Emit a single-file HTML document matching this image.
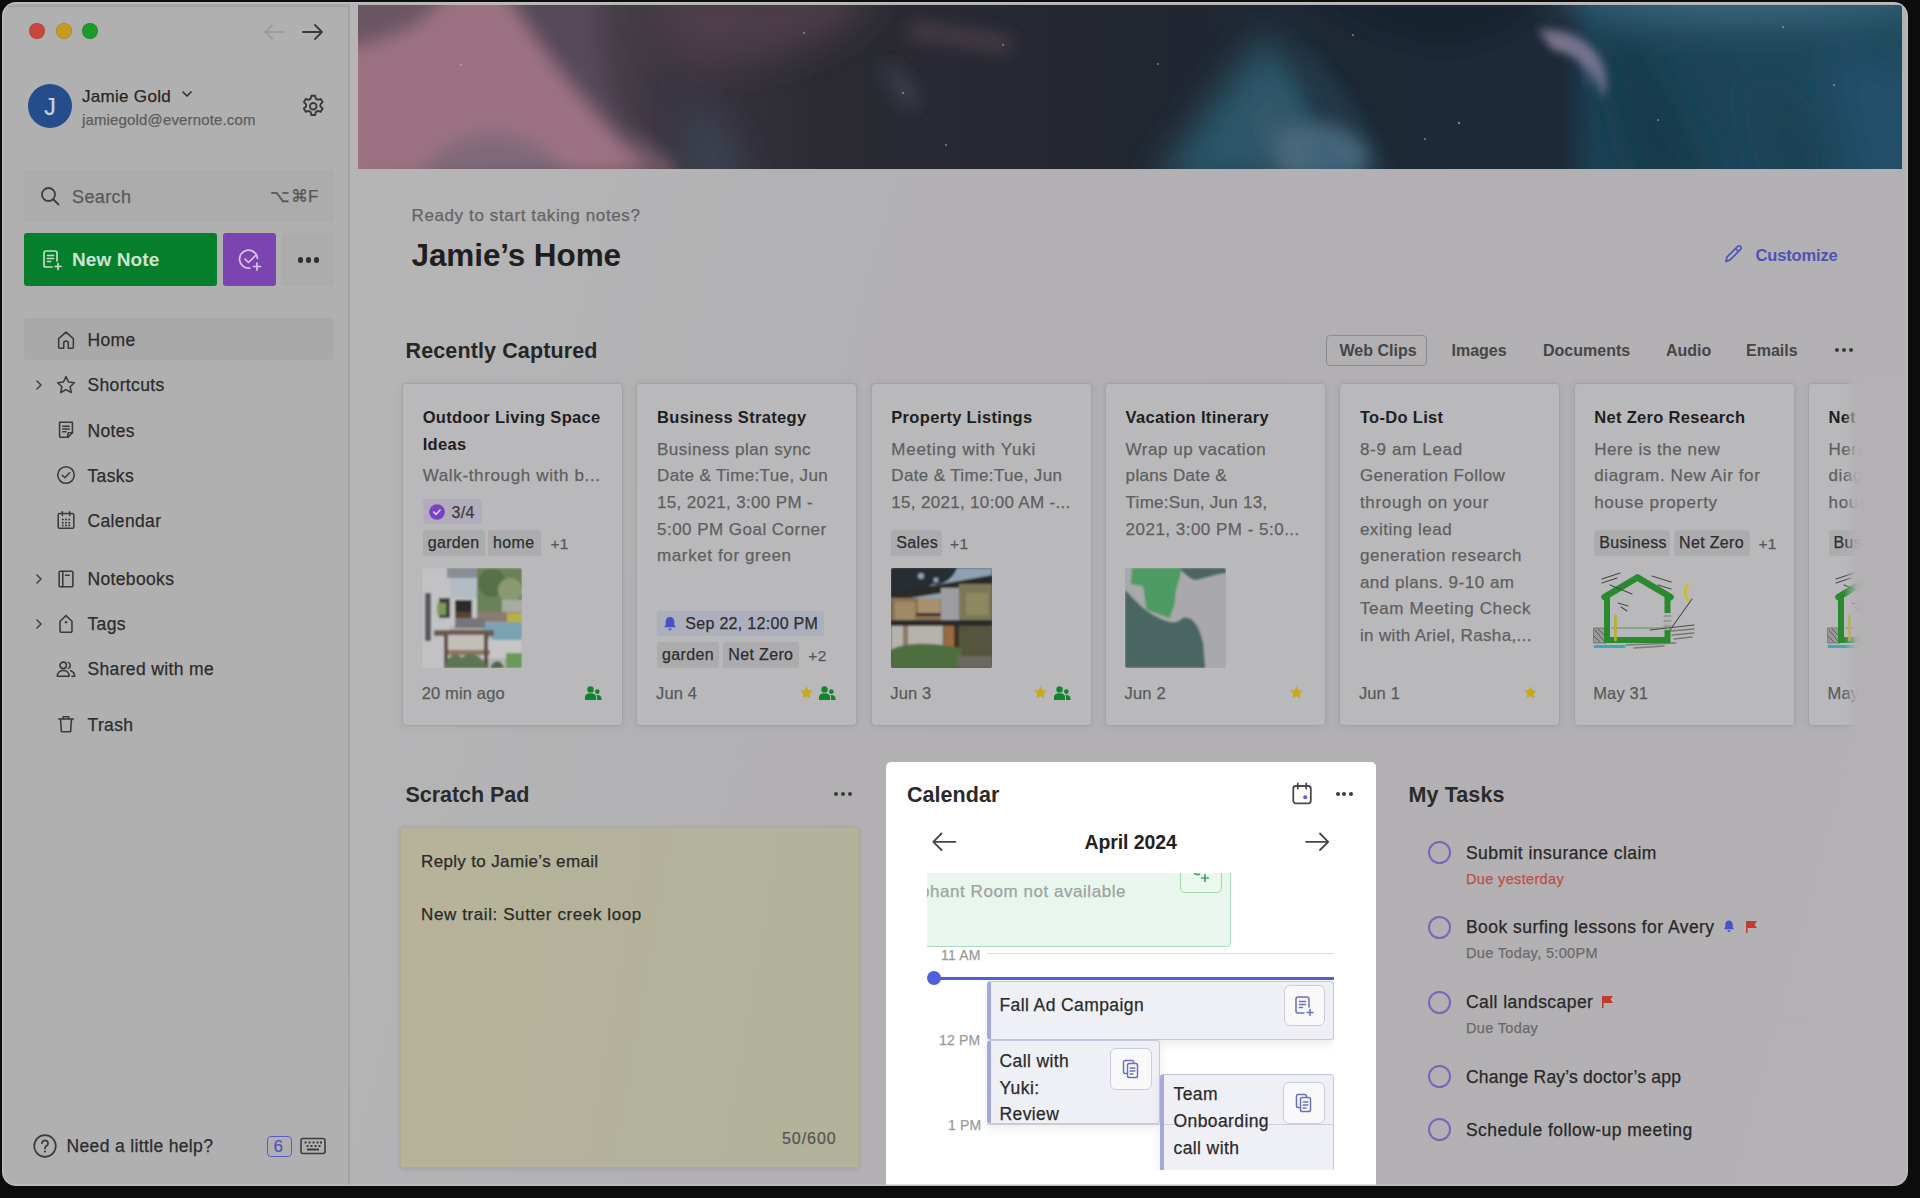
<!DOCTYPE html>
<html><head><meta charset="utf-8">
<style>
*{box-sizing:border-box;margin:0;padding:0}
html,body{width:1920px;height:1198px;overflow:hidden;background:#0c0c0c;font-family:"Liberation Sans",sans-serif;}
.a{position:absolute}
.t{position:absolute;white-space:nowrap;line-height:1;-webkit-text-stroke:0.25px currentColor}
svg{position:absolute;overflow:visible}
</style></head><body>

<div class="a" style="left:2px;top:2px;width:1906px;height:1184px;border-radius:14px;background:linear-gradient(105deg,#b5b5b6 0%,#b5b5b6 22%,#b2b1b3 38%,#b2b0b3 60%,#b4b1b4 100%)"></div>
<div class="a" style="left:2px;top:2px;width:348px;height:1184px;border-radius:14px 0 0 14px;background:#b0b0b0;border-right:2px solid #a3a3a3"></div>
<div class="a" style="left:29px;top:23.3px;width:16px;height:16px;border-radius:50%;background:#c9463f;box-shadow:inset 0 0 0 0.7px rgba(0,0,0,0.12)"></div>
<div class="a" style="left:55.5px;top:23.3px;width:16px;height:16px;border-radius:50%;background:#c79a22;box-shadow:inset 0 0 0 0.7px rgba(0,0,0,0.12)"></div>
<div class="a" style="left:82px;top:23.3px;width:16px;height:16px;border-radius:50%;background:#1c9a2a;box-shadow:inset 0 0 0 0.7px rgba(0,0,0,0.12)"></div>
<svg style="left:262px;top:22px" width="24" height="20" viewBox="0 0 24 20"><path d="M22 10H3M10 3L3 10l7 7" fill="none" stroke="#9d9d9d" stroke-width="1.8" stroke-linecap="round" stroke-linejoin="round"/></svg>
<svg style="left:301px;top:22px" width="24" height="20" viewBox="0 0 24 20"><path d="M2 10h19M14 3l7 7-7 7" fill="none" stroke="#3a3a3a" stroke-width="1.8" stroke-linecap="round" stroke-linejoin="round"/></svg>
<div class="a" style="left:28px;top:84px;width:44px;height:44px;border-radius:50%;background:#234d8b"></div>
<div class="t" style="left:44.3px;top:96.40px;font-size:23px;color:#cdd2dc;font-weight:normal;letter-spacing:0.0px;">J</div>
<div class="t" style="left:82px;top:87.88px;font-size:17px;color:#262626;font-weight:normal;letter-spacing:0.3px;">Jamie Gold</div>
<svg style="left:180.5px;top:89px" width="12" height="10" viewBox="0 0 12 10"><path d="M2 3l4 4 4-4" fill="none" stroke="#333" stroke-width="1.7" stroke-linecap="round" stroke-linejoin="round"/></svg>
<div class="t" style="left:82px;top:111.54px;font-size:15px;color:#5d5d5d;font-weight:normal;letter-spacing:0.15px;">jamiegold@evernote.com</div>
<svg style="left:299.5px;top:93px" width="26.5" height="26.5" viewBox="0 0 24 24"><g fill="none" stroke="#3a3a3a" stroke-width="1.7" stroke-linejoin="round"><path d="M10.3 2.5h3.4l.6 2.6 1.9 1.1 2.6-.8 1.7 2.9-2 1.8v2.2l2 1.8-1.7 2.9-2.6-.8-1.9 1.1-.6 2.6h-3.4l-.6-2.6-1.9-1.1-2.6.8-1.7-2.9 2-1.8v-2.2l-2-1.8 1.7-2.9 2.6.8 1.9-1.1z"/><circle cx="12" cy="12" r="3"/></g></svg>
<div class="a" style="left:24px;top:170px;width:310px;height:52px;border-radius:4px;background:#acacac"></div>
<svg style="left:40px;top:186px" width="20" height="20" viewBox="0 0 20 20"><circle cx="8.5" cy="8.5" r="6.5" fill="none" stroke="#3d3d3d" stroke-width="1.8"/><path d="M13.5 13.5l5 5" stroke="#3d3d3d" stroke-width="1.8" stroke-linecap="round"/></svg>
<div class="t" style="left:72px;top:187.55px;font-size:18px;color:#5a5a5a;font-weight:normal;letter-spacing:0.4px;">Search</div>
<div class="t" style="left:270px;top:188.38px;font-size:17px;color:#575757;font-weight:normal;letter-spacing:0.5px;">⌥⌘F</div>
<div class="a" style="left:24px;top:233px;width:193px;height:53px;border-radius:3px;background:#057f2b"></div>
<svg style="left:41px;top:249px" width="22" height="22" viewBox="0 0 22 22"><g fill="none" stroke="#c5dcc9" stroke-width="1.7" stroke-linecap="round" stroke-linejoin="round"><path d="M11 18H5a2 2 0 0 1-2-2V4a2 2 0 0 1 2-2h9a2 2 0 0 1 2 2v8"/><path d="M6.5 6.5h6M6.5 9.5h6M6.5 12.5h3M17 14.5v6M14 17.5h6"/></g></svg>
<div class="t" style="left:72px;top:250.22px;font-size:19px;color:#cfe3d2;font-weight:bold;letter-spacing:0.1px;-webkit-text-stroke:0;">New Note</div>
<div class="a" style="left:223px;top:233px;width:53px;height:53px;border-radius:3px;background:#7c44b0"></div>
<svg style="left:237px;top:247px" width="26" height="26" viewBox="0 0 26 26"><g fill="none" stroke="#d9c8e8" stroke-width="1.7" stroke-linecap="round" stroke-linejoin="round"><path d="M20.5 11.5A9 9 0 1 0 13 21"/><path d="M8 12l3.5 3.5 7-7"/><path d="M20 16v7M16.5 19.5h7"/></g></svg>
<div class="a" style="left:281px;top:233px;width:53px;height:53px;border-radius:3px;background:#acacac"></div>
<div class="a" style="left:297.8px;top:257.2px;width:5.5px;height:5.5px;border-radius:50%;background:#2e2e2e"></div>
<div class="a" style="left:305.8px;top:257.2px;width:5.5px;height:5.5px;border-radius:50%;background:#2e2e2e"></div>
<div class="a" style="left:313.8px;top:257.2px;width:5.5px;height:5.5px;border-radius:50%;background:#2e2e2e"></div>
<div class="a" style="left:24px;top:318px;width:310px;height:42px;border-radius:4px;background:#a9a9a9"></div>
<svg style="left:55px;top:328.7px" width="22" height="22" viewBox="0 0 24 24"><g fill="none" stroke="#3a3a3a" stroke-width="1.7" stroke-linecap="round" stroke-linejoin="round"><path d="M4 10.5L12 3.5l8 7V20a1 1 0 0 1-1 1h-4.5v-5.5a2.5 2.5 0 0 0-5 0V21H5a1 1 0 0 1-1-1z"/></g></svg>
<div class="t" style="left:87.5px;top:332.37px;font-size:17.5px;color:#2c2c2c;font-weight:normal;letter-spacing:0.35px;">Home</div>
<svg style="left:55px;top:373.8px" width="22" height="22" viewBox="0 0 24 24"><g fill="none" stroke="#3a3a3a" stroke-width="1.7" stroke-linecap="round" stroke-linejoin="round"><path d="M12 2.8l2.8 5.9 6.3.8-4.6 4.4 1.2 6.3L12 17.1l-5.7 3.1 1.2-6.3-4.6-4.4 6.3-.8z"/></g></svg>
<div class="t" style="left:87.5px;top:377.47px;font-size:17.5px;color:#2c2c2c;font-weight:normal;letter-spacing:0.35px;">Shortcuts</div>
<svg style="left:33px;top:378.8px" width="12" height="12" viewBox="0 0 12 12"><path d="M4 2l4 4-4 4" fill="none" stroke="#444" stroke-width="1.6" stroke-linecap="round" stroke-linejoin="round"/></svg>
<svg style="left:55px;top:418.9px" width="22" height="22" viewBox="0 0 24 24"><g fill="none" stroke="#3a3a3a" stroke-width="1.7" stroke-linecap="round" stroke-linejoin="round"><path d="M5 3.5h14v11.5l-5 5H6a1 1 0 0 1-1-1z"/><path d="M8.5 8h7M8.5 11h7M8.5 14h3.5M14 20v-4a1 1 0 0 1 1-1h4"/></g></svg>
<div class="t" style="left:87.5px;top:422.57px;font-size:17.5px;color:#2c2c2c;font-weight:normal;letter-spacing:0.35px;">Notes</div>
<svg style="left:55px;top:464px" width="22" height="22" viewBox="0 0 24 24"><g fill="none" stroke="#3a3a3a" stroke-width="1.7" stroke-linecap="round" stroke-linejoin="round"><circle cx="12" cy="12" r="9"/><path d="M8 12.3l2.7 2.7 5.3-5.5"/></g></svg>
<div class="t" style="left:87.5px;top:467.67px;font-size:17.5px;color:#2c2c2c;font-weight:normal;letter-spacing:0.35px;">Tasks</div>
<svg style="left:55px;top:509px" width="22" height="22" viewBox="0 0 24 24"><g fill="none" stroke="#3a3a3a" stroke-width="1.7" stroke-linecap="round" stroke-linejoin="round"><rect x="3.5" y="5" width="17" height="16" rx="1.5"/><path d="M8 3v4M16 3v4"/><g stroke="none" fill="#3a3a3a"><circle cx="8.5" cy="11.5" r="1.1"/><circle cx="12" cy="11.5" r="1.1"/><circle cx="15.5" cy="11.5" r="1.1"/><circle cx="8.5" cy="15" r="1.1"/><circle cx="12" cy="15" r="1.1"/><circle cx="15.5" cy="15" r="1.1"/><circle cx="8.5" cy="18" r="1.1"/><circle cx="12" cy="18" r="1.1"/><circle cx="15.5" cy="18" r="1.1"/></g></g></svg>
<div class="t" style="left:87.5px;top:512.67px;font-size:17.5px;color:#2c2c2c;font-weight:normal;letter-spacing:0.35px;">Calendar</div>
<svg style="left:55px;top:567.5px" width="22" height="22" viewBox="0 0 24 24"><g fill="none" stroke="#3a3a3a" stroke-width="1.7" stroke-linecap="round" stroke-linejoin="round"><rect x="4.5" y="3.5" width="15" height="17" rx="1"/><path d="M8.5 3.5v17M11.5 8h4"/></g></svg>
<div class="t" style="left:87.5px;top:571.17px;font-size:17.5px;color:#2c2c2c;font-weight:normal;letter-spacing:0.35px;">Notebooks</div>
<svg style="left:33px;top:572.5px" width="12" height="12" viewBox="0 0 12 12"><path d="M4 2l4 4-4 4" fill="none" stroke="#444" stroke-width="1.6" stroke-linecap="round" stroke-linejoin="round"/></svg>
<svg style="left:55px;top:612.6px" width="22" height="22" viewBox="0 0 24 24"><g fill="none" stroke="#3a3a3a" stroke-width="1.7" stroke-linecap="round" stroke-linejoin="round"><path d="M12 2.8l6.5 6.2V20a1 1 0 0 1-1 1h-11a1 1 0 0 1-1-1V9z"/><circle cx="12" cy="10" r="1.3" fill="#3a3a3a" stroke="none"/></g></svg>
<div class="t" style="left:87.5px;top:616.27px;font-size:17.5px;color:#2c2c2c;font-weight:normal;letter-spacing:0.35px;">Tags</div>
<svg style="left:33px;top:617.6px" width="12" height="12" viewBox="0 0 12 12"><path d="M4 2l4 4-4 4" fill="none" stroke="#444" stroke-width="1.6" stroke-linecap="round" stroke-linejoin="round"/></svg>
<svg style="left:55px;top:657.75px" width="22" height="22" viewBox="0 0 24 24"><g fill="none" stroke="#3a3a3a" stroke-width="1.7" stroke-linecap="round" stroke-linejoin="round"><circle cx="9" cy="8" r="3.5"/><path d="M2.5 20c0-3.8 2.9-6.5 6.5-6.5s6.5 2.7 6.5 6.5z"/><path d="M14.5 4.8a3.5 3.5 0 0 1 0 6.5M17 13.8c2.6.8 4.5 3.1 4.5 6.2h-3"/></g></svg>
<div class="t" style="left:87.5px;top:661.42px;font-size:17.5px;color:#2c2c2c;font-weight:normal;letter-spacing:0.35px;">Shared with me</div>
<svg style="left:55px;top:713.3px" width="22" height="22" viewBox="0 0 24 24"><g fill="none" stroke="#3a3a3a" stroke-width="1.7" stroke-linecap="round" stroke-linejoin="round"><path d="M4 6.5h16M9 6.5V4h6v2.5M6 6.5l1 14h10l1-14"/></g></svg>
<div class="t" style="left:87.5px;top:716.97px;font-size:17.5px;color:#2c2c2c;font-weight:normal;letter-spacing:0.35px;">Trash</div>
<svg style="left:33px;top:1134px" width="24" height="24" viewBox="0 0 24 24"><circle cx="12" cy="12" r="10.8" fill="none" stroke="#3c3c3c" stroke-width="1.7"/><path d="M9 9.3a3 3 0 1 1 4.2 2.8c-.8.4-1.2 1-1.2 1.8v.7" fill="none" stroke="#3c3c3c" stroke-width="1.7" stroke-linecap="round"/><circle cx="12" cy="17.6" r="1.1" fill="#3c3c3c"/></svg>
<div class="t" style="left:66.5px;top:1137.77px;font-size:17.5px;color:#2c2c2c;font-weight:normal;letter-spacing:0.35px;">Need a little help?</div>
<div class="a" style="left:266.5px;top:1135.5px;width:25.5px;height:21px;border:1.7px solid #5560c6;border-radius:4px"></div>
<div class="t" style="left:273.5px;top:1137.88px;font-size:17px;color:#4c57c0;font-weight:normal;letter-spacing:0.0px;">6</div>
<svg style="left:300px;top:1137px" width="26" height="18" viewBox="0 0 26 18"><rect x="1" y="1.5" width="24" height="15" rx="2" fill="none" stroke="#3c3c3c" stroke-width="1.6"/><g fill="#3c3c3c"><rect x="4.5" y="4.5" width="2" height="2"/><rect x="8.5" y="4.5" width="2" height="2"/><rect x="12.5" y="4.5" width="2" height="2"/><rect x="16.5" y="4.5" width="2" height="2"/><rect x="20" y="4.5" width="2" height="2"/><rect x="6.5" y="8" width="2" height="2"/><rect x="10.5" y="8" width="2" height="2"/><rect x="14.5" y="8" width="2" height="2"/><rect x="18.5" y="8" width="2" height="2"/><rect x="7" y="11.5" width="12" height="2"/></g></svg>
<svg style="left:358px;top:5px" width="1544" height="164" viewBox="0 0 1544 164" preserveAspectRatio="none">
<defs>
<filter id="bl" x="-20%" y="-50%" width="140%" height="200%"><feGaussianBlur stdDeviation="9"/></filter>
<filter id="bl3" x="-20%" y="-50%" width="140%" height="200%"><feGaussianBlur stdDeviation="18"/></filter>
<filter id="bl2" x="-20%" y="-50%" width="140%" height="200%"><feGaussianBlur stdDeviation="4"/></filter>
<linearGradient id="hg" x1="0" y1="0" x2="1" y2="0">
<stop offset="0" stop-color="#8e6a7a"/><stop offset="0.2" stop-color="#3a3540"/><stop offset="0.3" stop-color="#2c2b34"/><stop offset="0.5" stop-color="#222630"/><stop offset="0.6" stop-color="#1e2834"/><stop offset="0.78" stop-color="#1c2a38"/><stop offset="0.8" stop-color="#1c4054"/><stop offset="1" stop-color="#1e4a5e"/>
</linearGradient>
<clipPath id="hc"><rect width="1544" height="164"/></clipPath>
</defs>
<g clip-path="url(#hc)">
<rect width="1544" height="164" fill="url(#hg)"/>
<g filter="url(#bl3)">
<path d="M290 -20 L 520 -20 C 500 30, 420 60, 330 60 C 300 40, 290 20, 290 -20Z" fill="#4e3c48"/>
<path d="M330 90 C 360 110, 380 140, 390 180 L 330 180Z" fill="#3a4452"/>
<path d="M795 180 C 830 130, 870 75, 906 30 C 940 60, 975 110, 1005 180Z" fill="#2c566a"/>
<path d="M900 80 C 930 110, 950 150, 960 180 L 920 180 C 910 140, 900 110, 900 80Z" fill="#3e5a6a"/>
<path d="M1170 -20 C 1250 20, 1400 30, 1560 0 L 1560 -20Z" fill="#3d6a80"/>
<path d="M1260 20 C 1300 60, 1330 120, 1350 180 L 1280 180 C 1260 120, 1240 70, 1260 20Z" fill="#173a4c"/>
<path d="M1400 70 C 1440 100, 1460 140, 1470 180 L 1420 180 C 1410 140, 1400 110, 1400 70Z" fill="#1c4052"/>
<path d="M1470 40 C 1520 60, 1550 70, 1560 70 L 1560 180 L 1500 180 C 1490 130, 1480 90, 1470 40Z" fill="#24506a"/>
<path d="M0 90 C 30 100, 60 110, 80 130 L 0 130Z" fill="#8a6a7a"/>
</g>
<g filter="url(#bl)">
<path d="M-20 40 C 40 20, 60 5, 80 -20 L 142 -20 C 190 55, 260 115, 322 170 L -20 170 Z" fill="#9c7282"/>
<path d="M-20 -20 L 95 -20 C 75 15, 40 38, -20 44 Z" fill="#6c5464"/>
<path d="M142 -20 L 240 -20 C 232 35, 240 75, 258 105 C 275 135, 295 155, 315 175 L 300 175 C 245 120, 190 60, 142 -20 Z" fill="#564a5a"/>
<path d="M60 170 C 80 135, 130 115, 175 138 C 195 148, 205 160, 210 170 Z" fill="#80697a"/>
<path d="M555 20 C 590 25, 630 30, 655 35 L 650 45 C 620 40, 590 35, 550 30Z" fill="#5a4652"/>
<path d="M530 60 C 545 70, 555 85, 560 100 L 548 100 C 540 85, 532 72, 525 62Z" fill="#4a4a56"/>
<path d="M940 40 C 980 80, 1010 120, 1030 172 L 980 172 C 960 120, 945 80, 940 40Z" fill="#22384a"/>
<path d="M915 130 C 950 112, 990 118, 1010 150 L 1000 172 L 925 172Z" fill="#4a687c"/><path d="M950 125 C 975 130, 995 150, 1000 172 L 955 172Z" fill="#43647a"/>
<path d="M950 -20 C 980 10, 1020 30, 1080 40 C 1130 40, 1160 20, 1200 -20Z" fill="#19242f"/>
</g>
<g filter="url(#bl2)">
<path d="M1180 25 C 1225 20, 1258 55, 1245 95 C 1240 70, 1225 50, 1195 45Z" fill="#8a7e9c" opacity="0.8"/>
<path d="M1190 38 C 1215 40, 1230 60, 1232 80" stroke="#a08aa8" stroke-width="3" fill="none" opacity="0.6"/>
</g>
<g fill="#c8ccd8" opacity="0.55"><circle cx="103" cy="60" r="1"/><circle cx="446" cy="28" r="1"/><circle cx="545" cy="88" r="1.1"/><circle cx="645" cy="40" r="1"/><circle cx="800" cy="59" r="1"/><circle cx="1101" cy="118" r="1.2"/><circle cx="1425" cy="22" r="1"/><circle cx="1476" cy="80" r="1"/><circle cx="1067" cy="134" r="1"/><circle cx="588" cy="140" r="1"/><circle cx="995" cy="30" r="1"/><circle cx="1300" cy="115" r="1"/></g>
</g>
</svg>
<div class="t" style="left:411.5px;top:207.38px;font-size:17px;color:#646466;font-weight:normal;letter-spacing:0.62px;">Ready to start taking notes?</div>
<div class="t" style="left:411.5px;top:239.84px;font-size:31.5px;color:#1f1f1f;font-weight:bold;letter-spacing:-0.1px;-webkit-text-stroke:0;">Jamie’s Home</div>
<svg style="left:1722px;top:243px" width="22" height="22" viewBox="0 0 22 22"><path d="M4 18.5l1-4.5L15.5 3.5a2 2 0 0 1 3 3L8 17z M13.5 5.5l3 3" fill="none" stroke="#4b54b4" stroke-width="1.7" stroke-linejoin="round" stroke-linecap="round"/></svg>
<div class="t" style="left:1755.5px;top:247.30px;font-size:16.5px;color:#4b54b4;font-weight:bold;letter-spacing:-0.15px;-webkit-text-stroke:0;">Customize</div>
<div class="t" style="left:405.5px;top:341.14px;font-size:21.5px;color:#262626;font-weight:bold;letter-spacing:0.12px;-webkit-text-stroke:0;">Recently Captured</div>
<div class="a" style="left:1326px;top:334.5px;width:101px;height:31px;border:1.3px solid #8b8b8d;border-radius:4px"></div>
<div class="t" style="left:1339.5px;top:342.71px;font-size:16px;color:#454547;font-weight:bold;letter-spacing:0.0px;-webkit-text-stroke:0;">Web Clips</div>
<div class="t" style="left:1451.5px;top:342.71px;font-size:16px;color:#454547;font-weight:bold;letter-spacing:0.0px;-webkit-text-stroke:0;">Images</div>
<div class="t" style="left:1543px;top:342.71px;font-size:16px;color:#454547;font-weight:bold;letter-spacing:0.0px;-webkit-text-stroke:0;">Documents</div>
<div class="t" style="left:1666px;top:342.71px;font-size:16px;color:#454547;font-weight:bold;letter-spacing:0.0px;-webkit-text-stroke:0;">Audio</div>
<div class="t" style="left:1746px;top:342.71px;font-size:16px;color:#454547;font-weight:bold;letter-spacing:0.0px;-webkit-text-stroke:0;">Emails</div>
<div class="a" style="left:1835px;top:348px;width:4.2px;height:4.2px;border-radius:50%;background:#3a3a3a"></div>
<div class="a" style="left:1842px;top:348px;width:4.2px;height:4.2px;border-radius:50%;background:#3a3a3a"></div>
<div class="a" style="left:1849px;top:348px;width:4.2px;height:4.2px;border-radius:50%;background:#3a3a3a"></div>
<div class="a" style="left:402.0px;top:383px;width:221px;height:343px;border-radius:4px;background:#b9b9bb;border:1px solid #a3a3a5;box-shadow:0 0 9px rgba(0,0,0,0.075)"></div>
<div class="a" style="left:636.3px;top:383px;width:221px;height:343px;border-radius:4px;background:#b9b9bb;border:1px solid #a3a3a5;box-shadow:0 0 9px rgba(0,0,0,0.075)"></div>
<div class="a" style="left:870.6px;top:383px;width:221px;height:343px;border-radius:4px;background:#b9b9bb;border:1px solid #a3a3a5;box-shadow:0 0 9px rgba(0,0,0,0.075)"></div>
<div class="a" style="left:1104.9px;top:383px;width:221px;height:343px;border-radius:4px;background:#b9b9bb;border:1px solid #a3a3a5;box-shadow:0 0 9px rgba(0,0,0,0.075)"></div>
<div class="a" style="left:1339.2px;top:383px;width:221px;height:343px;border-radius:4px;background:#b9b9bb;border:1px solid #a3a3a5;box-shadow:0 0 9px rgba(0,0,0,0.075)"></div>
<div class="a" style="left:1573.5px;top:383px;width:221px;height:343px;border-radius:4px;background:#b9b9bb;border:1px solid #a3a3a5;box-shadow:0 0 9px rgba(0,0,0,0.075)"></div>
<div class="a" style="left:1807.8000000000002px;top:383px;width:221px;height:343px;border-radius:4px;background:#b9b9bb;border:1px solid #a3a3a5;box-shadow:0 0 9px rgba(0,0,0,0.075)"></div>
<div class="t" style="left:422.7px;top:409.30px;font-size:16.5px;color:#1f1f1f;font-weight:bold;letter-spacing:0.32px;-webkit-text-stroke:0;">Outdoor Living Space</div>
<div class="t" style="left:422.7px;top:435.90px;font-size:16.5px;color:#1f1f1f;font-weight:bold;letter-spacing:0.32px;-webkit-text-stroke:0;">Ideas</div>
<div class="t" style="left:422.7px;top:466.88px;font-size:17px;color:#5f5f61;font-weight:normal;letter-spacing:0.644px;">Walk-through with b...</div>
<div class="a" style="left:422.7px;top:499px;width:59px;height:25px;border-radius:3px;background:#b2acbc"></div>
<svg style="left:428.5px;top:503.5px" width="16" height="16" viewBox="0 0 16 16"><circle cx="8" cy="8" r="7.8" fill="#7842c2"/><path d="M4.8 8.2l2.2 2.1 4-4.2" fill="none" stroke="#d8c8ee" stroke-width="1.7" stroke-linecap="round" stroke-linejoin="round"/></svg>
<div class="t" style="left:451.5px;top:504.71px;font-size:16px;color:#3a3a3c;font-weight:normal;letter-spacing:0.3px;">3/4</div>
<div class="a" style="left:422.7px;top:530px;width:62px;height:26px;border-radius:3px;background:#acacae"></div>
<div class="t" style="left:427.7px;top:535.21px;font-size:16px;color:#2e2e2e;font-weight:normal;letter-spacing:0.35px;">garden</div>
<div class="a" style="left:488.0px;top:530px;width:53px;height:26px;border-radius:3px;background:#acacae"></div>
<div class="t" style="left:493.0px;top:535.21px;font-size:16px;color:#2e2e2e;font-weight:normal;letter-spacing:0.35px;">home</div>
<div class="t" style="left:550.5px;top:535.63px;font-size:15.5px;color:#58585a;font-weight:normal;letter-spacing:0.3px;">+1</div>
<div class="t" style="left:421.7px;top:684.80px;font-size:16.5px;color:#59595b;font-weight:normal;letter-spacing:0.15px;">20 min ago</div>
<svg style="left:585.0px;top:685.5px" width="16.5" height="14" viewBox="0 0 16.5 14"><g fill="#0f862b"><circle cx="5.5" cy="3.4" r="3.2"/><path d="M0 14V11.2C0 8.7 2 7.3 5.5 7.3S11 8.7 11 11.2V14Z"/><circle cx="12.3" cy="5.6" r="2.3"/><path d="M12.4 8.9C14.8 8.9 16.5 10.2 16.5 12.2V14H12V11.2C12 10.3 11.8 9.6 11.3 9.1Z"/></g></svg>
<svg style="left:422px;top:568px" width="100" height="100" viewBox="0 0 100 100"><defs><filter id="b1" x="-5%" y="-5%" width="110%" height="110%"><feGaussianBlur stdDeviation="1"/></filter><clipPath id="c1"><rect width="100" height="100" rx="2"/></clipPath></defs><g clip-path="url(#c1)"><rect width="100" height="100" fill="#b4b4b4"/><g filter="url(#b1)">
<rect x="0" y="0" width="28" height="100" fill="#c2c2c4"/><rect x="3" y="25" width="6" height="48" fill="#55585c"/>
<rect x="25" y="0" width="32" height="10" fill="#8a8e94"/><rect x="28" y="10" width="27" height="22" fill="#b2bcc6"/><rect x="25" y="30" width="32" height="28" fill="#c4c4c6"/>
<rect x="17" y="30" width="11" height="20" fill="#3e3c3a"/><rect x="33" y="32" width="17" height="20" fill="#2e2c2a"/><rect x="33" y="44" width="17" height="8" fill="#5a4232"/>
<rect x="55" y="0" width="45" height="46" fill="#6a8258"/><circle cx="70" cy="15" r="14" fill="#58704a"/><circle cx="88" cy="22" r="12" fill="#8a9a70"/><rect x="80" y="32" width="20" height="12" fill="#a8aca4"/>
<rect x="15" y="35" width="9" height="12" fill="#7a9a58"/>
<rect x="55" y="44" width="45" height="10" fill="#8a7c70"/><rect x="85" y="45" width="15" height="10" fill="#b8b040"/>
<path d="M55 55 L100 54 L100 74 L72 72 Z" fill="#7aa2b4"/><rect x="33" y="50" width="30" height="10" fill="#76767a"/>
<rect x="60" y="72" width="40" height="18" fill="#c6c6c6"/>
<rect x="12" y="62" width="60" height="6" fill="#6a5c52"/><rect x="24" y="67" width="42" height="18" fill="#c2beb8"/><rect x="24" y="82" width="44" height="5" fill="#8c7660"/>
<rect x="22" y="66" width="4" height="34" fill="#5e4e40"/><rect x="62" y="66" width="4" height="34" fill="#5e4e40"/>
<rect x="84" y="85" width="16" height="15" fill="#6a9a58"/><path d="M22 100 C 26 86, 34 84, 40 90 C 48 82, 58 86, 66 100Z" fill="#5c7452"/><path d="M68 100 C 72 92, 78 90, 82 100Z" fill="#50644a"/>
</g></g></svg>
<div class="t" style="left:657.0px;top:409.30px;font-size:16.5px;color:#1f1f1f;font-weight:bold;letter-spacing:0.32px;-webkit-text-stroke:0;">Business Strategy</div>
<div class="t" style="left:657.0px;top:440.88px;font-size:17px;color:#5f5f61;font-weight:normal;letter-spacing:0.476px;">Business plan sync</div>
<div class="t" style="left:657.0px;top:467.48px;font-size:17px;color:#5f5f61;font-weight:normal;letter-spacing:0.364px;">Date &amp; Time:Tue, Jun</div>
<div class="t" style="left:657.0px;top:494.08px;font-size:17px;color:#5f5f61;font-weight:normal;letter-spacing:0.355px;">15, 2021, 3:00 PM -</div>
<div class="t" style="left:657.0px;top:520.68px;font-size:17px;color:#5f5f61;font-weight:normal;letter-spacing:0.476px;">5:00 PM Goal Corner</div>
<div class="t" style="left:657.0px;top:547.28px;font-size:17px;color:#5f5f61;font-weight:normal;letter-spacing:0.619px;">market for green</div>
<div class="a" style="left:657.0px;top:611px;width:167px;height:25px;border-radius:3px;background:#acafbc"></div>
<svg style="left:663.3px;top:616px" width="14" height="15" viewBox="0 0 14 15"><path d="M7 1c-2.6 0-4.3 2-4.3 4.5v3.2L1.2 11.2h11.6L11.3 8.7V5.5C11.3 3 9.6 1 7 1z" fill="#4552c8"/><path d="M5.2 12.6a1.8 1.8 0 0 0 3.6 0z" fill="#4552c8"/></svg>
<div class="t" style="left:685.3px;top:616.21px;font-size:16px;color:#2e2e30;font-weight:normal;letter-spacing:0.3px;">Sep 22, 12:00 PM</div>
<div class="a" style="left:657.0px;top:642px;width:62px;height:26px;border-radius:3px;background:#acacae"></div>
<div class="t" style="left:662.0px;top:647.21px;font-size:16px;color:#2e2e2e;font-weight:normal;letter-spacing:0.35px;">garden</div>
<div class="a" style="left:723.3px;top:642px;width:76px;height:26px;border-radius:3px;background:#acacae"></div>
<div class="t" style="left:728.3px;top:647.21px;font-size:16px;color:#2e2e2e;font-weight:normal;letter-spacing:0.35px;">Net Zero</div>
<div class="t" style="left:808.3px;top:647.63px;font-size:15.5px;color:#58585a;font-weight:normal;letter-spacing:0.3px;">+2</div>
<div class="t" style="left:656.0px;top:684.80px;font-size:16.5px;color:#59595b;font-weight:normal;letter-spacing:0.15px;">Jun 4</div>
<svg style="left:798.8px;top:684.5px" width="15" height="15" viewBox="0 0 24 24"><path d="M12 1.8l3.1 6.5 7.1.9-5.2 4.9 1.3 7.1L12 17.8l-6.3 3.4 1.3-7.1-5.2-4.9 7.1-.9z" fill="#c9a81a"/></svg>
<svg style="left:819.3px;top:685.5px" width="16.5" height="14" viewBox="0 0 16.5 14"><g fill="#0f862b"><circle cx="5.5" cy="3.4" r="3.2"/><path d="M0 14V11.2C0 8.7 2 7.3 5.5 7.3S11 8.7 11 11.2V14Z"/><circle cx="12.3" cy="5.6" r="2.3"/><path d="M12.4 8.9C14.8 8.9 16.5 10.2 16.5 12.2V14H12V11.2C12 10.3 11.8 9.6 11.3 9.1Z"/></g></svg>
<div class="t" style="left:891.3000000000001px;top:409.30px;font-size:16.5px;color:#1f1f1f;font-weight:bold;letter-spacing:0.32px;-webkit-text-stroke:0;">Property Listings</div>
<div class="t" style="left:891.3000000000001px;top:440.88px;font-size:17px;color:#5f5f61;font-weight:normal;letter-spacing:0.745px;">Meeting with Yuki</div>
<div class="t" style="left:891.3000000000001px;top:467.48px;font-size:17px;color:#5f5f61;font-weight:normal;letter-spacing:0.364px;">Date &amp; Time:Tue, Jun</div>
<div class="t" style="left:891.3000000000001px;top:494.08px;font-size:17px;color:#5f5f61;font-weight:normal;letter-spacing:0.318px;">15, 2021, 10:00 AM -...</div>
<div class="a" style="left:891.3000000000001px;top:530px;width:51px;height:26px;border-radius:3px;background:#acacae"></div>
<div class="t" style="left:896.3000000000001px;top:535.21px;font-size:16px;color:#2e2e2e;font-weight:normal;letter-spacing:0.35px;">Sales</div>
<div class="t" style="left:950.1px;top:535.63px;font-size:15.5px;color:#58585a;font-weight:normal;letter-spacing:0.3px;">+1</div>
<div class="t" style="left:890.3000000000001px;top:684.80px;font-size:16.5px;color:#59595b;font-weight:normal;letter-spacing:0.15px;">Jun 3</div>
<svg style="left:1033.1px;top:684.5px" width="15" height="15" viewBox="0 0 24 24"><path d="M12 1.8l3.1 6.5 7.1.9-5.2 4.9 1.3 7.1L12 17.8l-6.3 3.4 1.3-7.1-5.2-4.9 7.1-.9z" fill="#c9a81a"/></svg>
<svg style="left:1053.6px;top:685.5px" width="16.5" height="14" viewBox="0 0 16.5 14"><g fill="#0f862b"><circle cx="5.5" cy="3.4" r="3.2"/><path d="M0 14V11.2C0 8.7 2 7.3 5.5 7.3S11 8.7 11 11.2V14Z"/><circle cx="12.3" cy="5.6" r="2.3"/><path d="M12.4 8.9C14.8 8.9 16.5 10.2 16.5 12.2V14H12V11.2C12 10.3 11.8 9.6 11.3 9.1Z"/></g></svg>
<svg style="left:890.6px;top:568px" width="101" height="100" viewBox="0 0 101 100"><defs><filter id="b3" x="-5%" y="-5%" width="110%" height="110%"><feGaussianBlur stdDeviation="1"/></filter><clipPath id="c3"><rect width="101" height="100" rx="2"/></clipPath></defs><g clip-path="url(#c3)"><rect width="101" height="100" fill="#5a5448"/><g filter="url(#b3)">
<rect x="0" y="0" width="101" height="32" fill="#8ea2b6"/><path d="M0 0 H66 C 62 12, 50 18, 42 16 C 30 24, 18 22, 10 26 L 0 28Z" fill="#262e36"/><circle cx="30" cy="8" r="3" fill="#8ea2b6"/><circle cx="45" cy="12" r="2.5" fill="#8ea2b6"/>
<path d="M0 25 L101 7 L101 17 L0 33Z" fill="#2a2a28"/>
<rect x="0" y="30" width="52" height="25" fill="#8a7254"/><rect x="4" y="34" width="20" height="18" fill="#a08868"/><rect x="27" y="30" width="22" height="18" fill="#a89070"/><rect x="25" y="45" width="25" height="3" fill="#2e2a26"/>
<rect x="50" y="20" width="18" height="34" fill="#9c9ea2"/><rect x="68" y="16" width="33" height="40" fill="#7c7856"/><rect x="75" y="25" width="22" height="22" fill="#8c8860"/>
<rect x="0" y="52" width="101" height="6" fill="#2a2a2a"/>
<rect x="0" y="58" width="52" height="30" fill="#b6b2ac"/><rect x="12" y="58" width="5" height="30" fill="#8a7a60"/><rect x="53" y="58" width="10" height="26" fill="#9a6a40"/><rect x="63" y="58" width="5" height="26" fill="#3a3228"/><rect x="68" y="58" width="33" height="34" fill="#54543e"/>
<path d="M0 100 V 82 C 12 74, 40 74, 70 80 L 72 100Z" fill="#4f6e3e"/><rect x="66" y="88" width="35" height="12" fill="#6a6860"/>
</g></g></svg>
<div class="t" style="left:1125.6000000000001px;top:409.30px;font-size:16.5px;color:#1f1f1f;font-weight:bold;letter-spacing:0.32px;-webkit-text-stroke:0;">Vacation Itinerary</div>
<div class="t" style="left:1125.6000000000001px;top:440.88px;font-size:17px;color:#5f5f61;font-weight:normal;letter-spacing:0.534px;">Wrap up vacation</div>
<div class="t" style="left:1125.6000000000001px;top:467.48px;font-size:17px;color:#5f5f61;font-weight:normal;letter-spacing:0.334px;">plans Date &amp;</div>
<div class="t" style="left:1125.6000000000001px;top:494.08px;font-size:17px;color:#5f5f61;font-weight:normal;letter-spacing:0.267px;">Time:Sun, Jun 13,</div>
<div class="t" style="left:1125.6000000000001px;top:520.68px;font-size:17px;color:#5f5f61;font-weight:normal;letter-spacing:0.486px;">2021, 3:00 PM - 5:0...</div>
<div class="t" style="left:1124.6000000000001px;top:684.80px;font-size:16.5px;color:#59595b;font-weight:normal;letter-spacing:0.15px;">Jun 2</div>
<svg style="left:1288.9px;top:684.5px" width="15" height="15" viewBox="0 0 24 24"><path d="M12 1.8l3.1 6.5 7.1.9-5.2 4.9 1.3 7.1L12 17.8l-6.3 3.4 1.3-7.1-5.2-4.9 7.1-.9z" fill="#c9a81a"/></svg>
<svg style="left:1124.9px;top:568px" width="101" height="100" viewBox="0 0 101 100"><defs><filter id="b4"><feGaussianBlur stdDeviation="0.9"/></filter><clipPath id="c4"><rect width="101" height="100" rx="2"/></clipPath></defs><g clip-path="url(#c4)"><rect width="101" height="100" fill="#a9a8aa"/><g filter="url(#b4)">
<path d="M0 22 C 10 32, 20 45, 38 52 C 48 56, 52 55, 58 50 C 68 48, 74 58, 78 75 L 80 100 L 0 100Z" fill="#4a6664"/>
<path d="M53 0 C 60 5, 64 10, 70 12 C 80 10, 90 6, 101 5 V0Z" fill="#4a6664"/>
<path d="M7 0 H 56 C 56 10, 50 20, 50 30 C 50 40, 45 45, 45 50 L 22 42 C 20 35, 20 25, 18 18 L 6 16Z" fill="#4e9a62"/>
</g></g></svg>
<div class="t" style="left:1359.9px;top:409.30px;font-size:16.5px;color:#1f1f1f;font-weight:bold;letter-spacing:0.32px;-webkit-text-stroke:0;">To-Do List</div>
<div class="t" style="left:1359.9px;top:440.88px;font-size:17px;color:#5f5f61;font-weight:normal;letter-spacing:0.685px;">8-9 am Lead</div>
<div class="t" style="left:1359.9px;top:467.48px;font-size:17px;color:#5f5f61;font-weight:normal;letter-spacing:0.437px;">Generation Follow</div>
<div class="t" style="left:1359.9px;top:494.08px;font-size:17px;color:#5f5f61;font-weight:normal;letter-spacing:0.673px;">through on your</div>
<div class="t" style="left:1359.9px;top:520.68px;font-size:17px;color:#5f5f61;font-weight:normal;letter-spacing:0.527px;">exiting lead</div>
<div class="t" style="left:1359.9px;top:547.28px;font-size:17px;color:#5f5f61;font-weight:normal;letter-spacing:0.578px;">generation research</div>
<div class="t" style="left:1359.9px;top:573.88px;font-size:17px;color:#5f5f61;font-weight:normal;letter-spacing:0.504px;">and plans. 9-10 am</div>
<div class="t" style="left:1359.9px;top:600.48px;font-size:17px;color:#5f5f61;font-weight:normal;letter-spacing:0.64px;">Team Meeting Check</div>
<div class="t" style="left:1359.9px;top:627.08px;font-size:17px;color:#5f5f61;font-weight:normal;letter-spacing:0.35px;">in with Ariel, Rasha,...</div>
<div class="t" style="left:1358.9px;top:684.80px;font-size:16.5px;color:#59595b;font-weight:normal;letter-spacing:0.15px;">Jun 1</div>
<svg style="left:1523.2px;top:684.5px" width="15" height="15" viewBox="0 0 24 24"><path d="M12 1.8l3.1 6.5 7.1.9-5.2 4.9 1.3 7.1L12 17.8l-6.3 3.4 1.3-7.1-5.2-4.9 7.1-.9z" fill="#c9a81a"/></svg>
<div class="t" style="left:1594.2px;top:409.30px;font-size:16.5px;color:#1f1f1f;font-weight:bold;letter-spacing:0.32px;-webkit-text-stroke:0;">Net Zero Research</div>
<div class="t" style="left:1594.2px;top:440.88px;font-size:17px;color:#5f5f61;font-weight:normal;letter-spacing:0.532px;">Here is the new</div>
<div class="t" style="left:1594.2px;top:467.48px;font-size:17px;color:#5f5f61;font-weight:normal;letter-spacing:0.611px;">diagram. New Air for</div>
<div class="t" style="left:1594.2px;top:494.08px;font-size:17px;color:#5f5f61;font-weight:normal;letter-spacing:0.73px;">house property</div>
<div class="a" style="left:1594.2px;top:530px;width:76px;height:26px;border-radius:3px;background:#acacae"></div>
<div class="t" style="left:1599.2px;top:535.21px;font-size:16px;color:#2e2e2e;font-weight:normal;letter-spacing:0.35px;">Business</div>
<div class="a" style="left:1674.0px;top:530px;width:76px;height:26px;border-radius:3px;background:#acacae"></div>
<div class="t" style="left:1679.0px;top:535.21px;font-size:16px;color:#2e2e2e;font-weight:normal;letter-spacing:0.35px;">Net Zero</div>
<div class="t" style="left:1758.5px;top:535.63px;font-size:15.5px;color:#58585a;font-weight:normal;letter-spacing:0.3px;">+1</div>
<div class="t" style="left:1593.2px;top:684.80px;font-size:16.5px;color:#59595b;font-weight:normal;letter-spacing:0.15px;">May 31</div>
<svg style="left:1593.5px;top:566px" width="101" height="100" viewBox="0 0 101 100"><g fill="none" stroke-linecap="round">
<path d="M0 62 H 12 V 77 H 0Z" fill="#9a9a9a" stroke="#6a6a6a" stroke-width="0.8"/><path d="M1 64 L 10 75 M 4 63 L 12 71 M 0 70 L 6 76" stroke="#555" stroke-width="0.9"/>
<path d="M77 65 L 100 63 M 78 69 L 100 67 M 80 73 L 98 71" stroke="#777" stroke-width="1.3"/>
<path d="M32 79 L 82 77 M 40 82 L 70 80" stroke="#7a7a7a" stroke-width="1.4"/>
<path d="M10.5 31 L 43.5 11.5 L 76.5 31" stroke="#2a8a30" stroke-width="6.5"/><path d="M13 31 V 74 H 73.5 V 31" stroke="#2a8a30" stroke-width="6"/>
<rect x="70" y="47" width="7" height="17" fill="#b4b6b4" stroke="none"/><path d="M70 50 H 77 M 70 55 H 77 M 70 60 H 77" stroke="#666" stroke-width="0.7"/>
<path d="M18 62 L 72 62" stroke="#1f7a28" stroke-width="1" opacity="0.6"/>
<path d="M8 13 L 26 7 M 8 17 L 23 12 M 16 19 L 38 28 M 58 10 L 77 16 M 64 19 L 77 23 M 98 33 L 76 64 M 56 64 L 100 59 M 24 37 L 34 40 M 27 41 L 33 45" stroke="#4a4a4a" stroke-width="1.1"/>
<path d="M21.5 50 V 74" stroke="#b8b020" stroke-width="2.5"/><path d="M94 18 C 90 24, 90 29, 94 34" stroke="#c8c020" stroke-width="2.5"/>
<path d="M1 80.5 H 30" stroke="#3aa8b8" stroke-width="3"/></g></svg>
<div class="t" style="left:1828.5000000000002px;top:409.30px;font-size:16.5px;color:#1f1f1f;font-weight:bold;letter-spacing:0.32px;-webkit-text-stroke:0;">Net Zero Research</div>
<div class="t" style="left:1828.5000000000002px;top:440.88px;font-size:17px;color:#5f5f61;font-weight:normal;letter-spacing:0.532px;">Here is the new</div>
<div class="t" style="left:1828.5000000000002px;top:467.48px;font-size:17px;color:#5f5f61;font-weight:normal;letter-spacing:0.611px;">diagram. New Air for</div>
<div class="t" style="left:1828.5000000000002px;top:494.08px;font-size:17px;color:#5f5f61;font-weight:normal;letter-spacing:0.73px;">house property</div>
<div class="a" style="left:1828.5000000000002px;top:530px;width:76px;height:26px;border-radius:3px;background:#acacae"></div>
<div class="t" style="left:1833.5000000000002px;top:535.21px;font-size:16px;color:#2e2e2e;font-weight:normal;letter-spacing:0.35px;">Business</div>
<div class="t" style="left:1827.5000000000002px;top:684.80px;font-size:16.5px;color:#59595b;font-weight:normal;letter-spacing:0.15px;">May 31</div>
<svg style="left:1827.8000000000002px;top:566px" width="101" height="100" viewBox="0 0 101 100"><g fill="none" stroke-linecap="round">
<path d="M0 62 H 12 V 77 H 0Z" fill="#9a9a9a" stroke="#6a6a6a" stroke-width="0.8"/><path d="M1 64 L 10 75 M 4 63 L 12 71 M 0 70 L 6 76" stroke="#555" stroke-width="0.9"/>
<path d="M77 65 L 100 63 M 78 69 L 100 67 M 80 73 L 98 71" stroke="#777" stroke-width="1.3"/>
<path d="M32 79 L 82 77 M 40 82 L 70 80" stroke="#7a7a7a" stroke-width="1.4"/>
<path d="M10.5 31 L 43.5 11.5 L 76.5 31" stroke="#2a8a30" stroke-width="6.5"/><path d="M13 31 V 74 H 73.5 V 31" stroke="#2a8a30" stroke-width="6"/>
<rect x="70" y="47" width="7" height="17" fill="#b4b6b4" stroke="none"/><path d="M70 50 H 77 M 70 55 H 77 M 70 60 H 77" stroke="#666" stroke-width="0.7"/>
<path d="M18 62 L 72 62" stroke="#1f7a28" stroke-width="1" opacity="0.6"/>
<path d="M8 13 L 26 7 M 8 17 L 23 12 M 16 19 L 38 28 M 58 10 L 77 16 M 64 19 L 77 23 M 98 33 L 76 64 M 56 64 L 100 59 M 24 37 L 34 40 M 27 41 L 33 45" stroke="#4a4a4a" stroke-width="1.1"/>
<path d="M21.5 50 V 74" stroke="#b8b020" stroke-width="2.5"/><path d="M94 18 C 90 24, 90 29, 94 34" stroke="#c8c020" stroke-width="2.5"/>
<path d="M1 80.5 H 30" stroke="#3aa8b8" stroke-width="3"/></g></svg>
<div class="a" style="left:1844px;top:375px;width:64px;height:360px;background:linear-gradient(90deg, rgba(180,177,180,0) 0px, rgba(180,177,180,0.9) 12px, #b4b1b4 20px)"></div>
<div class="t" style="left:405.5px;top:784.74px;font-size:21.5px;color:#2a2a2a;font-weight:bold;letter-spacing:-0.05px;-webkit-text-stroke:0;">Scratch Pad</div>
<div class="a" style="left:833.5px;top:792px;width:4.2px;height:4.2px;border-radius:50%;background:#3a3a3a"></div>
<div class="a" style="left:840.5px;top:792px;width:4.2px;height:4.2px;border-radius:50%;background:#3a3a3a"></div>
<div class="a" style="left:847.5px;top:792px;width:4.2px;height:4.2px;border-radius:50%;background:#3a3a3a"></div>
<div class="a" style="left:400px;top:826.5px;width:458.5px;height:341.5px;border-radius:3px;background:linear-gradient(100deg,#b7b39a 0%,#b4b29b 50%,#b2b39b 100%);border:1px solid #acaa92;box-shadow:0 1px 4px rgba(0,0,0,0.12)"></div>
<div class="t" style="left:421px;top:853.38px;font-size:17px;color:#2a2a28;font-weight:normal;letter-spacing:0.35px;">Reply to Jamie’s email</div>
<div class="t" style="left:421px;top:906.38px;font-size:17px;color:#2a2a28;font-weight:normal;letter-spacing:0.6px;">New trail: Sutter creek loop</div>
<div class="t" style="left:782px;top:1131.21px;font-size:16px;color:#56564f;font-weight:normal;letter-spacing:0.95px;">50/600</div>
<div class="t" style="left:1408.5px;top:784.74px;font-size:21.5px;color:#2a2a2a;font-weight:bold;letter-spacing:0.1px;-webkit-text-stroke:0;">My Tasks</div>
<div class="a" style="left:1427.5px;top:840.8px;width:23px;height:23px;border-radius:50%;border:2px solid #7f62bc"></div>
<div class="t" style="left:1466px;top:844.67px;font-size:17.5px;color:#282828;font-weight:normal;letter-spacing:0.45px;">Submit insurance claim</div>
<div class="t" style="left:1466px;top:871.76px;font-size:14.5px;color:#bd4f4a;font-weight:normal;letter-spacing:0.35px;">Due yesterday</div>
<div class="a" style="left:1427.5px;top:915.5px;width:23px;height:23px;border-radius:50%;border:2px solid #7f62bc"></div>
<div class="t" style="left:1466px;top:919.37px;font-size:17.5px;color:#282828;font-weight:normal;letter-spacing:0.45px;">Book surfing lessons for Avery</div>
<div class="t" style="left:1466px;top:946.46px;font-size:14.5px;color:#6a6a6c;font-weight:normal;letter-spacing:0.35px;">Due Today, 5:00PM</div>
<div class="a" style="left:1427.5px;top:990.5px;width:23px;height:23px;border-radius:50%;border:2px solid #7f62bc"></div>
<div class="t" style="left:1466px;top:994.37px;font-size:17.5px;color:#282828;font-weight:normal;letter-spacing:0.45px;">Call landscaper</div>
<div class="t" style="left:1466px;top:1021.46px;font-size:14.5px;color:#6a6a6c;font-weight:normal;letter-spacing:0.35px;">Due Today</div>
<div class="a" style="left:1427.5px;top:1065.2px;width:23px;height:23px;border-radius:50%;border:2px solid #7f62bc"></div>
<div class="t" style="left:1466px;top:1069.07px;font-size:17.5px;color:#282828;font-weight:normal;letter-spacing:0.2px;">Change Ray’s doctor’s app</div>
<div class="a" style="left:1427.5px;top:1118.1px;width:23px;height:23px;border-radius:50%;border:2px solid #7f62bc"></div>
<div class="t" style="left:1466px;top:1121.97px;font-size:17.5px;color:#282828;font-weight:normal;letter-spacing:0.45px;">Schedule follow-up meeting</div>
<svg style="left:1723px;top:919px" width="12" height="14" viewBox="0 0 14 15"><path d="M7 1c-2.6 0-4.3 2-4.3 4.5v3.2L1.2 11.2h11.6L11.3 8.7V5.5C11.3 3 9.6 1 7 1z" fill="#4552c8"/><path d="M5.2 12.6a1.8 1.8 0 0 0 3.6 0z" fill="#4552c8"/></svg>
<svg style="left:1744.5px;top:919.5px" width="13" height="13" viewBox="0 0 13 13"><path d="M1 1h11l-2.5 3.5L12 8H2.6v5H1z" fill="#bf3b34"/></svg>
<svg style="left:1601px;top:994.5px" width="13" height="13" viewBox="0 0 13 13"><path d="M1 1h11l-2.5 3.5L12 8H2.6v5H1z" fill="#bf3b34"/></svg>
<div class="a" style="left:886px;top:761.5px;width:489.5px;height:440px;border-radius:5px;background:#ffffff"></div>
<div class="t" style="left:907px;top:784.74px;font-size:21.5px;color:#2a2a2a;font-weight:bold;letter-spacing:0.05px;-webkit-text-stroke:0;">Calendar</div>
<svg style="left:1291px;top:781px" width="22" height="24" viewBox="0 0 22 24"><rect x="2.3" y="5" width="17.5" height="17.3" rx="2.5" fill="none" stroke="#4a4a4a" stroke-width="1.8"/><path d="M6.8 2.5v5M15.2 2.5v5" stroke="#4a4a4a" stroke-width="1.8" stroke-linecap="round"/><circle cx="14.2" cy="16.3" r="2" fill="#5a5ad8"/></svg>
<div class="a" style="left:1335.7px;top:791.7px;width:4.2px;height:4.2px;border-radius:50%;background:#3a3a3a"></div>
<div class="a" style="left:1342.2px;top:791.7px;width:4.2px;height:4.2px;border-radius:50%;background:#3a3a3a"></div>
<div class="a" style="left:1348.7px;top:791.7px;width:4.2px;height:4.2px;border-radius:50%;background:#3a3a3a"></div>
<svg style="left:931px;top:830px" width="28" height="24" viewBox="0 0 28 24"><path d="M24.5 11.8H2.5M10.5 3.5L2.3 11.8l8.2 8.2" fill="none" stroke="#454545" stroke-width="1.8" stroke-linecap="round" stroke-linejoin="round"/></svg>
<svg style="left:1303px;top:830px" width="28" height="24" viewBox="0 0 28 24"><path d="M3 11.8h22M17 3.5l8.2 8.3L17 20" fill="none" stroke="#454545" stroke-width="1.8" stroke-linecap="round" stroke-linejoin="round"/></svg>
<div class="t" style="left:1084.5px;top:833.31px;font-size:19.5px;color:#222222;font-weight:bold;letter-spacing:-0.1px;-webkit-text-stroke:0;">April 2024</div>
<div class="a" style="left:927px;top:873px;width:407px;height:297px;overflow:hidden">
<div class="a" style="left:-20px;top:-40px;width:323.5px;height:113.5px;border-radius:4px;background:#e8f6ed;border:1.3px solid #a9dcbf"></div>
<div class="a" style="left:252.5px;top:-20px;width:42.5px;height:39.5px;border-radius:5px;border:1.3px solid #9ed6ae;background:#eaf8ee"></div>
<svg style="left:265px;top:-2px" width="20" height="14" viewBox="0 0 20 14"><path d="M2.5 -3v4.5a1.8 1.8 0 0 0 1.8 1.8h3.2M13 3.8v6.4M9.8 7h6.4" fill="none" stroke="#45a065" stroke-width="1.7" stroke-linecap="round"/><circle cx="5.8" cy="1" r="0.95" fill="#45a065"/></svg>
<div class="t" style="left:-7px;top:10.38px;font-size:17px;color:#a0a2a1;font-weight:normal;letter-spacing:0.55px;">phant Room not available</div>
<div class="t" style="left:14px;top:74.87px;font-size:14px;color:#9a9a9a;font-weight:normal;letter-spacing:0.2px;">11 AM</div>
<div class="a" style="left:59.5px;top:80px;width:347.5px;height:1.3px;background:#dcdcdc"></div>
<div class="t" style="left:12px;top:160.37px;font-size:14px;color:#9a9a9a;font-weight:normal;letter-spacing:0.2px;">12 PM</div>
<div class="t" style="left:21px;top:245.37px;font-size:14px;color:#9a9a9a;font-weight:normal;letter-spacing:0.2px;">1 PM</div>
<div class="a" style="left:59.5px;top:250.5px;width:347.5px;height:1.3px;background:#dcdcdc"></div>
<div class="a" style="left:7px;top:103.5px;width:400px;height:3px;background:#4f5fe0"></div>
<div class="a" style="left:0px;top:98px;width:14px;height:14px;border-radius:50%;background:#4f5fe0"></div>
<div class="a" style="left:59.5px;top:107.5px;width:347.5px;height:59.0px;border-radius:4px;background:#eff0f6;border:1.3px solid #c5c7e0;border-left:4px solid #a3a8dc;box-shadow:0 4px 9px rgba(60,60,100,0.10)"></div>
<div class="a" style="left:356.5px;top:112px;width:41.5px;height:41px;border-radius:6px;background:#f9f9fc;border:1.3px solid #c9cbe0"></div>
<svg style="left:366.25px;top:121.5px" width="22" height="22" viewBox="0 0 22 22"><g fill="none" stroke="#6a70b8" stroke-width="1.5" stroke-linecap="round" stroke-linejoin="round"><path d="M11 18H5a2 2 0 0 1-2-2V4a2 2 0 0 1 2-2h9a2 2 0 0 1 2 2v8"/><path d="M6.5 6.5h6M6.5 9.5h6M6.5 12.5h3M17 14.5v6M14 17.5h6"/></g></svg>
<div class="t" style="left:72.5px;top:124.47px;font-size:17.5px;color:#2a2a2a;font-weight:normal;letter-spacing:0.4px;">Fall Ad Campaign</div>
<div class="a" style="left:59.5px;top:167px;width:173.0px;height:84px;border-radius:4px;background:#eff0f6;border:1.3px solid #c5c7e0;border-left:4px solid #a3a8dc;box-shadow:0 4px 9px rgba(60,60,100,0.10)"></div>
<div class="a" style="left:183px;top:175px;width:42px;height:42px;border-radius:6px;background:#f9f9fc;border:1.3px solid #c9cbe0"></div>
<svg style="left:194.0px;top:186.0px" width="20" height="20" viewBox="0 0 20 20"><g fill="none" stroke="#6a70b8" stroke-width="1.5" stroke-linecap="round" stroke-linejoin="round"><path d="M12.5 3.5V3a1.5 1.5 0 0 0-1.5-1.5H4A1.5 1.5 0 0 0 2.5 3v10A1.5 1.5 0 0 0 4 14.5h1.5"/><rect x="6.5" y="4.5" width="10" height="14" rx="1.8" fill="#f9f9fc"/><path d="M9.2 9h4.6M9.2 12h4.6M9.2 15h2.8"/></g></svg>
<div class="t" style="left:72.5px;top:179.97px;font-size:17.5px;color:#2a2a2a;font-weight:normal;letter-spacing:0.4px;">Call with</div>
<div class="t" style="left:72.5px;top:206.57px;font-size:17.5px;color:#2a2a2a;font-weight:normal;letter-spacing:0.4px;">Yuki:</div>
<div class="t" style="left:72.5px;top:233.17px;font-size:17.5px;color:#2a2a2a;font-weight:normal;letter-spacing:0.4px;">Review</div>
<div class="a" style="left:233px;top:201px;width:174px;height:126px;border-radius:4px;background:#eff0f6;border:1.3px solid #c5c7e0;border-left:4px solid #a3a8dc;box-shadow:0 4px 9px rgba(60,60,100,0.10)"></div>
<div class="a" style="left:356px;top:209px;width:42px;height:42px;border-radius:6px;background:#f9f9fc;border:1.3px solid #c9cbe0"></div>
<svg style="left:367.0px;top:220.0px" width="20" height="20" viewBox="0 0 20 20"><g fill="none" stroke="#6a70b8" stroke-width="1.5" stroke-linecap="round" stroke-linejoin="round"><path d="M12.5 3.5V3a1.5 1.5 0 0 0-1.5-1.5H4A1.5 1.5 0 0 0 2.5 3v10A1.5 1.5 0 0 0 4 14.5h1.5"/><rect x="6.5" y="4.5" width="10" height="14" rx="1.8" fill="#f9f9fc"/><path d="M9.2 9h4.6M9.2 12h4.6M9.2 15h2.8"/></g></svg>
<div class="a" style="left:237px;top:250.79999999999995px;width:169px;height:1.3px;background:#cfd0de"></div>
<div class="t" style="left:246.5px;top:213.47px;font-size:17.5px;color:#2a2a2a;font-weight:normal;letter-spacing:0.4px;">Team</div>
<div class="t" style="left:246.5px;top:240.07px;font-size:17.5px;color:#2a2a2a;font-weight:normal;letter-spacing:0.4px;">Onboarding</div>
<div class="t" style="left:246.5px;top:266.67px;font-size:17.5px;color:#2a2a2a;font-weight:normal;letter-spacing:0.4px;">call with</div>
</div>
<div class="a" style="left:2px;top:2px;width:348px;height:5px;border-radius:14px 0 0 0;background:linear-gradient(180deg,#bcbcbc 0,#bcbcbc 2px,#a2a2a2 2px,#a2a2a2 3px,#acacac 3px,#acacac 4px,#9e9e9e 4px)"></div>
<div class="a" style="left:2px;top:2px;width:1906px;height:1184px;border-radius:14px;box-shadow:inset 0 0 0 1.5px #bdbdbd"></div>
<div class="a" style="left:2px;top:2px;width:1906px;height:1184px;border-radius:14px;box-shadow:0 0 0 60px #0c0c0c;pointer-events:none"></div>
</body></html>
